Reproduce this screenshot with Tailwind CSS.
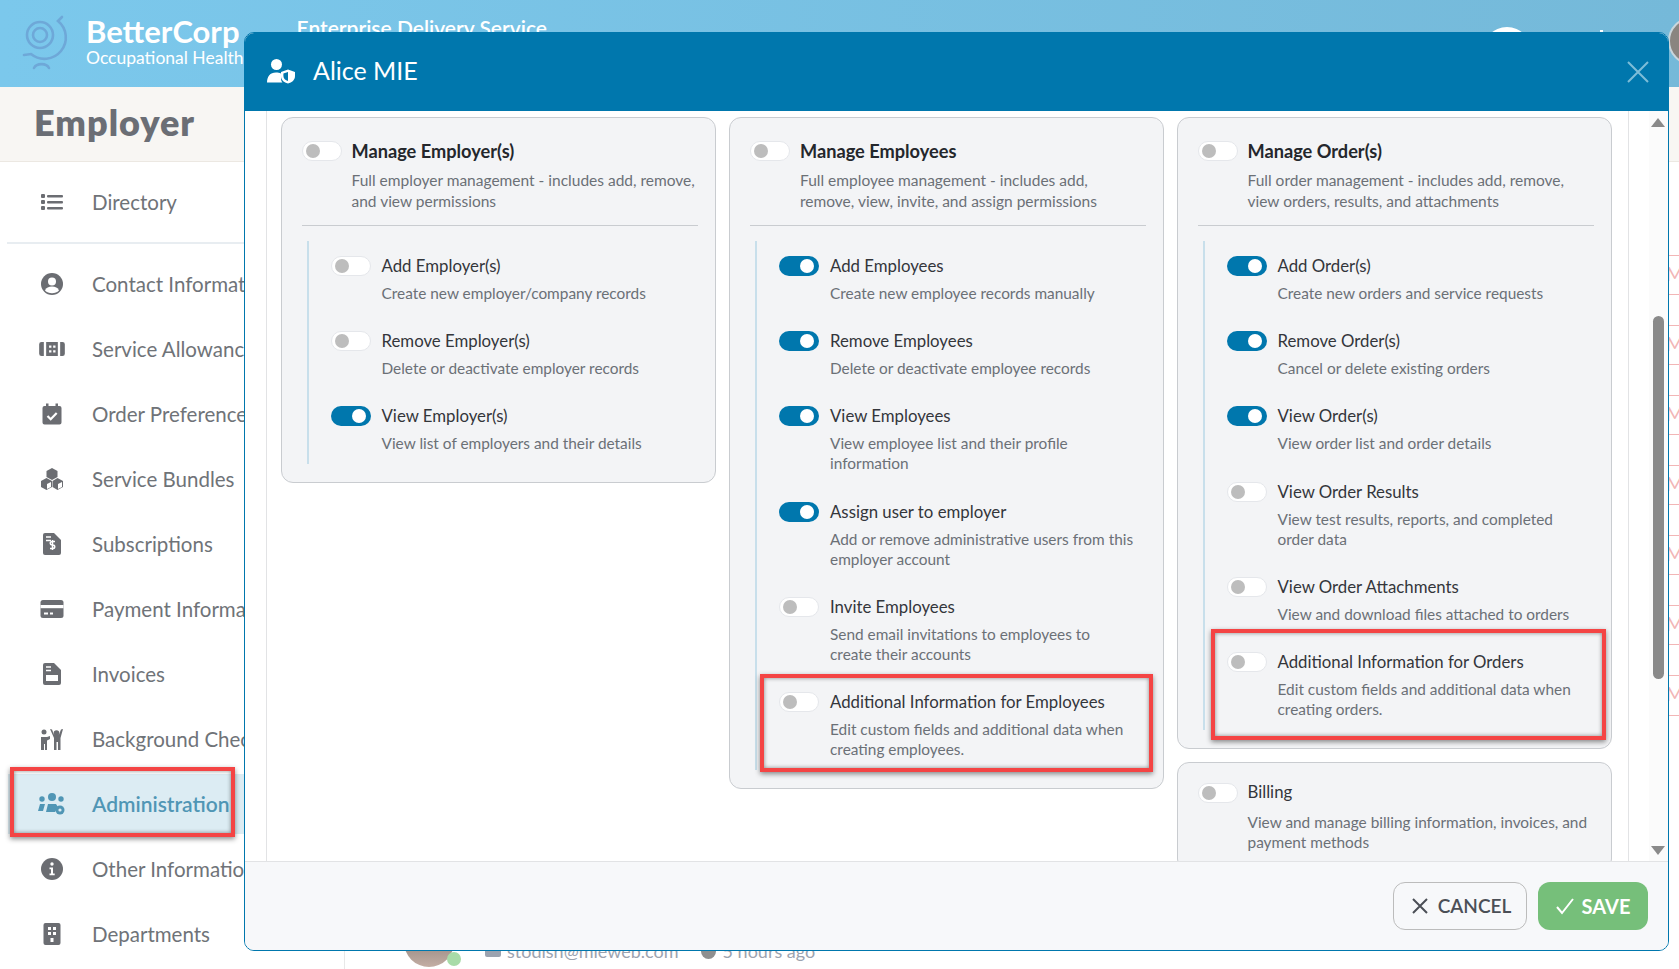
<!doctype html>
<html lang="en">
  <head>
    <meta charset="UTF-8" />
    <meta name="viewport" content="width=device-width, initial-scale=1.0" />
    <title>Employer - Administration</title>
    <script src="https://cdn.jsdelivr.net/npm/@tailwindcss/browser@4"></script>
  </head>
  <body class="relative h-[969px] w-[1679px] overflow-hidden bg-white [font-family:Lato,sans-serif]">
    <!-- Top bar -->
    <header class="flex h-[87px] bg-gradient-to-r from-[#7bc8ec] to-[#75b9d9]">
      <svg class="ml-[20px] mt-[10px] h-[60px] w-[50px] shrink-0" viewBox="20 10 50 60" fill="none" stroke="#6ea8d8" stroke-width="2.6" stroke-linecap="round">
        <circle cx="40" cy="35" r="7" />
        <circle cx="40" cy="35" r="13" />
        <path d="M62 17 L58 21 A21 21 0 0 1 31 54 L24 55" />
        <path d="M34 68 A8 6 0 0 1 49 68" />
      </svg>
      <div class="ml-[16px] pt-[14px] text-white">
        <div class="text-[31px] font-bold leading-[34px]">BetterCorp</div>
        <div class="text-[17.5px] leading-[20px]">Occupational Health</div>
      </div>
      <div class="ml-[53px] pt-[16px] text-[21px] font-semibold leading-[24px] text-white">Enterprise Delivery Service</div>
      <div class="ml-auto mr-[-37px] flex shrink-0 items-start">
        <div class="mt-[27px] size-[50px] rounded-full bg-white"></div>
        <div class="ml-[68px] mt-[30px] size-[3px] bg-white"></div>
        <div class="ml-[65px] mt-[17px] size-[48px] rounded-full border-2 border-[#c9d6dc] bg-[#8a8580]"></div>
      </div>
    </header>

    <!-- Section title -->
    <div class="flex h-[75px] items-center border-b border-[#ece8e2] bg-[#f8f6f3] pb-[4px] pl-[34px]">
      <h1 class="text-[36px] font-extrabold tracking-[1px] text-[#6b6e75]">Employer</h1>
    </div>

    <div class="flex h-[807px]">
      <!-- Sidebar -->
      <nav class="w-[345px] shrink-0 border-r border-[#e8e8e8] text-[20.500px] text-[#6f7378]">
        <a class="flex h-[80px] items-center pl-[40px]">
          <svg class="mr-[28px] size-[24px]" viewBox="0 0 24 24" fill="#6b6d72"><rect x="1" y="4" width="4" height="4" rx="1" /><rect x="1" y="10" width="4" height="4" rx="1" /><rect x="1" y="16" width="4" height="4" rx="1" /><rect x="7" y="5" width="16" height="2.4" rx="1" /><rect x="7" y="11" width="16" height="2.4" rx="1" /><rect x="7" y="17" width="16" height="2.4" rx="1" /></svg>
          Directory
        </a>
        <div class="ml-[7px] h-[2px] bg-[#e8edf1]"></div>
        <div class="mt-[10px] flex flex-col gap-[5px]">
          <a class="ml-[8px] flex h-[60px] items-center whitespace-nowrap pl-[32px]">
            <svg class="mr-[28px] size-[24px] shrink-0" viewBox="0 0 24 24"><circle cx="12" cy="12" r="11" fill="#6b6d72" /><circle cx="12" cy="9.5" r="4" fill="#fff" /><path d="M5 18.5c1.2-3 3.6-4 7-4s5.800 1 7 4c-1.800 1.700-4.200 2.800-7 2.800s-5.200-1.100-7-2.800z" fill="#fff" /></svg>
            Contact Information
          </a>
          <a class="ml-[8px] flex h-[60px] items-center whitespace-nowrap pl-[32px]">
            <svg class="-ml-[2px] mr-[26px] size-[28px] shrink-0" viewBox="0 0 24 24" fill="#6b6d72"><path d="M3 6h2v12H3a2 2 0 0 1-2-2V8a2 2 0 0 1 2-2zM21 6h-2v12h2a2 2 0 0 0 2-2V8a2 2 0 0 0-2-2z" /><path fill-rule="evenodd" d="M7 6h10v12H7zM9.500 9v2h2V9zm3.500 0v2h2V9zm-3.500 4v2h2v-2zm3.500 0v2h2v-2z" /></svg>
            Service Allowances
          </a>
          <a class="ml-[8px] flex h-[60px] items-center whitespace-nowrap pl-[32px]">
            <svg class="mr-[28px] size-[24px] shrink-0" viewBox="0 0 24 24"><path d="M6 1.500h2.500V4h7V1.500H18V4h1.500a2 2 0 0 1 2 2v14.500a2 2 0 0 1-2 2h-15a2 2 0 0 1-2-2V6a2 2 0 0 1 2-2H6z" fill="#6b6d72" /><path d="M7.500 14l3.200 3.200 6-6.200" fill="none" stroke="#fff" stroke-width="2.200" /></svg>
            Order Preferences
          </a>
          <a class="ml-[8px] flex h-[60px] items-center whitespace-nowrap pl-[32px]">
            <svg class="mr-[28px] size-[24px] shrink-0" viewBox="0 0 24 24" fill="#6b6d72"><path d="M12 1l5.500 3v6L12 13l-5.500-3V4z" /><path d="M6.500 11L12 14v6l-5.500 3L1 20v-6z" /><path d="M17.500 11L23 14v6l-5.500 3-5-3v-6z" /><path d="M7 17l4-2v5l-4 2zM18 17l4-2v5l-4 2z" fill="#fff" /></svg>
            Service Bundles
          </a>
          <a class="ml-[8px] flex h-[60px] items-center whitespace-nowrap pl-[32px]">
            <svg class="mr-[28px] size-[24px] shrink-0" viewBox="0 0 24 24"><path d="M5 1h9l7 7v13a2 2 0 0 1-2 2H5a2 2 0 0 1-2-2V3a2 2 0 0 1 2-2z" fill="#6b6d72" /><path d="M6 5h5M6 8.500h5" stroke="#fff" stroke-width="1.500" /><path d="M15 9.500h-3a1.500 1.500 0 0 0 0 3.500h1a1.500 1.500 0 0 1 0 3.500h-3M12.500 8v10" fill="none" stroke="#fff" stroke-width="1.500" /></svg>
            Subscriptions
          </a>
          <a class="ml-[8px] flex h-[60px] items-center whitespace-nowrap pl-[32px]">
            <svg class="mr-[28px] size-[24px] shrink-0" viewBox="0 0 24 24"><rect x="0.500" y="3" width="23" height="18" rx="2.500" fill="#6b6d72" /><rect x="0.500" y="8" width="23" height="3.200" fill="#fff" /><path d="M4 16.500h4M10 16.500h3" stroke="#fff" stroke-width="1.800" /></svg>
            Payment Information
          </a>
          <a class="ml-[8px] flex h-[60px] items-center whitespace-nowrap pl-[32px]">
            <svg class="mr-[28px] size-[24px] shrink-0" viewBox="0 0 24 24"><path d="M5 1h9l7 7v13a2 2 0 0 1-2 2H5a2 2 0 0 1-2-2V3a2 2 0 0 1 2-2z" fill="#6b6d72" /><path d="M6 5h5M6 8.500h5" stroke="#fff" stroke-width="1.500" /><rect x="6" y="13" width="12" height="6" fill="#fff" /></svg>
            Invoices
          </a>
          <a class="ml-[8px] flex h-[60px] items-center whitespace-nowrap pl-[32px]">
            <svg class="mr-[28px] size-[24px] shrink-0" viewBox="0 0 24 24" fill="#6b6d72"><circle cx="4" cy="5" r="2.500" /><path d="M1 10h6l3-1v3l-3 1.500V23H5v-6H4v6H1z" /><circle cx="16.500" cy="6" r="2.800" /><path d="M10 2l2 .500 2 5h5l2-5 2-.500-2.500 9v12h-2.500v-8h-1.500v8H14V11z" /></svg>
            Background Checks
          </a>
          <!-- Active item, called out with a red box -->
          <a class="relative ml-[8px] flex h-[60px] items-center whitespace-nowrap bg-[#dcecf3] pl-[32px] text-[21px] font-semibold text-[#5096b5]">
            <svg class="-ml-[2px] mr-[26px] size-[28px] shrink-0" viewBox="0 0 28 24" fill="#5096b5"><circle cx="14" cy="5" r="4" /><circle cx="4" cy="7" r="2.700" /><circle cx="23" cy="7" r="2.700" /><path d="M0 19l2-7h5l-2 7zM8 20l2-8h8l2 3-3 5z" /><circle cx="22" cy="18" r="4.500" /><circle cx="22" cy="18" r="1.600" fill="#dcecf3" /></svg>
            Administration
            <div class="absolute left-[2px] top-[-7px] h-[70px] w-[225px] border-4 border-[#f44444] shadow-[0_2px_5px_rgba(0,0,0,0.45),inset_0_0_4px_rgba(0,0,0,0.45)]"></div>
          </a>
          <a class="ml-[8px] flex h-[60px] items-center whitespace-nowrap pl-[32px]">
            <svg class="mr-[28px] size-[24px] shrink-0" viewBox="0 0 24 24"><circle cx="12" cy="12" r="11" fill="#6b6d72" /><circle cx="12" cy="7" r="1.700" fill="#fff" /><path d="M9.500 10.500H13v6h1.700v1.800H9.500v-1.800h1.500v-4.200H9.500z" fill="#fff" /></svg>
            Other Information
          </a>
          <a class="ml-[8px] flex h-[60px] items-center whitespace-nowrap pl-[32px]">
            <svg class="mr-[28px] size-[24px] shrink-0" viewBox="0 0 24 24"><rect x="3.500" y="1" width="17" height="22" rx="2" fill="#6b6d72" /><path d="M8 5h3v3H8zM13 5h3v3h-3zM8 10h3v3H8zM13 10h3v3h-3zM10.500 16h3v4h-3z" fill="#fff" /></svg>
            Departments
          </a>
        </div>
      </nav>

      <!-- Page behind the dialog -->
      <main class="flex flex-1 justify-between text-[18px] text-[#9ca3af]">
        <div class="flex items-end pb-[2px] pl-[59px]">
          <div class="relative size-[50px] rounded-full bg-gradient-to-b from-[#6f6a66] to-[#c4aea4]">
            <span class="absolute bottom-[1px] right-[-7px] size-[14px] rounded-full bg-[#a8dba8]"></span>
          </div>
          <div class="ml-[31px] flex items-center pb-[6px] leading-[20px]">
            <svg class="mr-[6px] size-[16px]" viewBox="0 0 16 16" fill="#9ca3af"><rect y="3" width="16" height="11" rx="2" /></svg>
            <span>stodish@mieweb.com</span>
            <svg class="ml-[22px] mr-[7px] size-[15px]" viewBox="0 0 16 16" fill="#8f8f8f"><circle cx="8" cy="8" r="8" /></svg>
            <span>5 hours ago</span>
          </div>
        </div>
        <div class="flex w-[80px] flex-col gap-[30px] pt-[93px] text-[19px] leading-[36px] text-[#f2b6b6]">
          <div class="h-[40px] shrink-0 overflow-hidden rounded-l-lg border-y border-l border-[#f2b6b6] pl-[66px]">M</div>
          <div class="h-[40px] shrink-0 overflow-hidden rounded-l-lg border-y border-l border-[#f2b6b6] pl-[66px]">M</div>
          <div class="h-[40px] shrink-0 overflow-hidden rounded-l-lg border-y border-l border-[#f2b6b6] pl-[66px]">M</div>
          <div class="h-[40px] shrink-0 overflow-hidden rounded-l-lg border-y border-l border-[#f2b6b6] pl-[66px]">M</div>
          <div class="h-[40px] shrink-0 overflow-hidden rounded-l-lg border-y border-l border-[#f2b6b6] pl-[66px]">M</div>
          <div class="h-[40px] shrink-0 overflow-hidden rounded-l-lg border-y border-l border-[#f2b6b6] pl-[66px]">M</div>
          <div class="h-[41px] shrink-0 overflow-hidden rounded-l-lg border-y border-l border-[#f2b6b6] pl-[66px]">M</div>
        </div>
      </main>
    </div>

    <!-- Permissions dialog -->
    <div class="absolute left-[244px] top-[32px] flex h-[919px] w-[1425px] flex-col overflow-hidden rounded-[10px] border-[1.5px] border-[#0077ad] bg-white">
      <div class="flex h-[78px] shrink-0 items-center bg-[#0077ad] pb-[3px] pl-[22px] pr-[19px] text-white">
        <svg class="mr-[18px] size-[28px]" viewBox="0 0 28 25" fill="#fff"><circle cx="9.500" cy="6" r="5.500" /><path d="M0 24c0-6 3-10 9-10 2 0 3.500.400 5 1v5c0 1.500.500 3 1.500 4z" /><path fill-rule="evenodd" d="M21 11l7 2.500v4c0 4-3 6.500-7 7.500-4-1-7-3.500-7-7.500v-4zm0 2.400l-4.600 1.600v2.500c0 2.500 2 4.300 4.600 5.100z" /></svg>
        <span class="text-[25px] leading-none">Alice MIE</span>
        <svg class="ml-auto mt-[3px] size-[22px]" viewBox="0 0 22 22" fill="none" stroke="#7dbdd8" stroke-width="2"><path d="M1 1l20 20M21 1L1 21" /></svg>
      </div>

      <div class="flex min-h-0 flex-1 overflow-hidden">
        <div class="ml-[20.500px] w-[1363px] shrink-0 border-x border-[#e2e3e5] pl-[14px] pr-[15px] pt-[6px]">
          <div class="grid w-[1332px] grid-cols-3 items-start gap-[13.500px]">
            <!-- Employer column -->
            <section class="rounded-xl border border-[#c9ccd0] bg-[#f3f4f6] pb-[18px] pl-[20px] pr-[17px] pt-[23px]">
              <div class="flex">
                <span class="relative mr-[10px] h-[20px] w-[40px] shrink-0 rounded-full border border-[#e5e7eb] bg-white"><span class="absolute left-[3px] top-[2px] size-[14px] rounded-full bg-[#bdbdbd]"></span></span>
                <div>
                  <h3 class="text-[18.200px] font-bold leading-[20px] text-[#24272c]">Manage Employer(s)</h3>
                  <p class="mt-[9px] whitespace-nowrap text-[15.500px] leading-[20.500px] text-[#6b7076]">Full employer management - includes add, remove,<br />and view permissions</p>
                </div>
              </div>
              <div class="mt-[14px] h-px bg-[#c9ccd0]"></div>
              <div class="ml-[5px] mt-[15px] flex flex-col gap-[28.200px] border-l-2 border-[#c8dfeb] pb-[11px] pl-[22px] pt-[15px]">
                <div class="flex">
                  <span class="relative mr-[11px] h-[20px] w-[40px] shrink-0 rounded-full border border-[#e5e7eb] bg-white"><span class="absolute left-[3px] top-[2px] size-[14px] rounded-full bg-[#bdbdbd]"></span></span>
                  <div><h4 class="text-[16.800px] leading-[20px] text-[#33363b]">Add Employer(s)</h4><p class="mt-[7px] whitespace-nowrap text-[15.400px] leading-[20px] text-[#6b7076]">Create new employer/company records</p></div>
                </div>
                <div class="flex">
                  <span class="relative mr-[11px] h-[20px] w-[40px] shrink-0 rounded-full border border-[#e5e7eb] bg-white"><span class="absolute left-[3px] top-[2px] size-[14px] rounded-full bg-[#bdbdbd]"></span></span>
                  <div><h4 class="text-[16.800px] leading-[20px] text-[#33363b]">Remove Employer(s)</h4><p class="mt-[7px] whitespace-nowrap text-[15.400px] leading-[20px] text-[#6b7076]">Delete or deactivate employer records</p></div>
                </div>
                <div class="flex">
                  <span class="relative mr-[11px] h-[20px] w-[40px] shrink-0 rounded-full bg-[#0077ad]"><span class="absolute right-[5px] top-[3px] size-[14px] rounded-full bg-white"></span></span>
                  <div><h4 class="text-[16.800px] leading-[20px] text-[#33363b]">View Employer(s)</h4><p class="mt-[7px] whitespace-nowrap text-[15.400px] leading-[20px] text-[#6b7076]">View list of employers and their details</p></div>
                </div>
              </div>
            </section>

            <!-- Employees column -->
            <section class="rounded-xl border border-[#c9ccd0] bg-[#f3f4f6] pb-[18px] pl-[20px] pr-[17px] pt-[23px]">
              <div class="flex">
                <span class="relative mr-[10px] h-[20px] w-[40px] shrink-0 rounded-full border border-[#e5e7eb] bg-white"><span class="absolute left-[3px] top-[2px] size-[14px] rounded-full bg-[#bdbdbd]"></span></span>
                <div>
                  <h3 class="text-[18.200px] font-bold leading-[20px] text-[#24272c]">Manage Employees</h3>
                  <p class="mt-[9px] whitespace-nowrap text-[15.500px] leading-[20.500px] text-[#6b7076]">Full employee management - includes add,<br />remove, view, invite, and assign permissions</p>
                </div>
              </div>
              <div class="mt-[14px] h-px bg-[#c9ccd0]"></div>
              <div class="ml-[5px] mt-[15px] flex flex-col gap-[28.200px] border-l-2 border-[#c8dfeb] pb-[11px] pl-[22px] pt-[15px]">
                <div class="flex">
                  <span class="relative mr-[11px] h-[20px] w-[40px] shrink-0 rounded-full bg-[#0077ad]"><span class="absolute right-[5px] top-[3px] size-[14px] rounded-full bg-white"></span></span>
                  <div><h4 class="text-[16.800px] leading-[20px] text-[#33363b]">Add Employees</h4><p class="mt-[7px] whitespace-nowrap text-[15.400px] leading-[20px] text-[#6b7076]">Create new employee records manually</p></div>
                </div>
                <div class="flex">
                  <span class="relative mr-[11px] h-[20px] w-[40px] shrink-0 rounded-full bg-[#0077ad]"><span class="absolute right-[5px] top-[3px] size-[14px] rounded-full bg-white"></span></span>
                  <div><h4 class="text-[16.800px] leading-[20px] text-[#33363b]">Remove Employees</h4><p class="mt-[7px] whitespace-nowrap text-[15.400px] leading-[20px] text-[#6b7076]">Delete or deactivate employee records</p></div>
                </div>
                <div class="flex">
                  <span class="relative mr-[11px] h-[20px] w-[40px] shrink-0 rounded-full bg-[#0077ad]"><span class="absolute right-[5px] top-[3px] size-[14px] rounded-full bg-white"></span></span>
                  <div><h4 class="text-[16.800px] leading-[20px] text-[#33363b]">View Employees</h4><p class="mt-[7px] whitespace-nowrap text-[15.400px] leading-[20px] text-[#6b7076]">View employee list and their profile<br />information</p></div>
                </div>
                <div class="flex">
                  <span class="relative mr-[11px] h-[20px] w-[40px] shrink-0 rounded-full bg-[#0077ad]"><span class="absolute right-[5px] top-[3px] size-[14px] rounded-full bg-white"></span></span>
                  <div><h4 class="text-[16.800px] leading-[20px] text-[#33363b]">Assign user to employer</h4><p class="mt-[7px] whitespace-nowrap text-[15.400px] leading-[20px] text-[#6b7076]">Add or remove administrative users from this<br />employer account</p></div>
                </div>
                <div class="flex">
                  <span class="relative mr-[11px] h-[20px] w-[40px] shrink-0 rounded-full border border-[#e5e7eb] bg-white"><span class="absolute left-[3px] top-[2px] size-[14px] rounded-full bg-[#bdbdbd]"></span></span>
                  <div><h4 class="text-[16.800px] leading-[20px] text-[#33363b]">Invite Employees</h4><p class="mt-[7px] whitespace-nowrap text-[15.400px] leading-[20px] text-[#6b7076]">Send email invitations to employees to<br />create their accounts</p></div>
                </div>
                <div class="relative flex">
                  <span class="relative mr-[11px] h-[20px] w-[40px] shrink-0 rounded-full border border-[#e5e7eb] bg-white"><span class="absolute left-[3px] top-[2px] size-[14px] rounded-full bg-[#bdbdbd]"></span></span>
                  <div><h4 class="text-[16.800px] leading-[20px] text-[#33363b]">Additional Information for Employees</h4><p class="mt-[7px] whitespace-nowrap text-[15.400px] leading-[20px] text-[#6b7076]">Edit custom fields and additional data when<br />creating employees.</p></div>
                  <div class="absolute -bottom-[13px] -left-[19px] -right-[7px] -top-[18px] border-4 border-[#f44444] shadow-[0_2px_5px_rgba(0,0,0,0.45),inset_0_0_4px_rgba(0,0,0,0.45)]"></div>
                </div>
              </div>
            </section>

            <!-- Orders column -->
            <div class="-ml-[1px] mr-[1px] flex flex-col gap-[13px]">
              <section class="rounded-xl border border-[#c9ccd0] bg-[#f3f4f6] pb-[18px] pl-[20px] pr-[17px] pt-[23px]">
                <div class="flex">
                  <span class="relative mr-[10px] h-[20px] w-[40px] shrink-0 rounded-full border border-[#e5e7eb] bg-white"><span class="absolute left-[3px] top-[2px] size-[14px] rounded-full bg-[#bdbdbd]"></span></span>
                  <div>
                    <h3 class="text-[18.200px] font-bold leading-[20px] text-[#24272c]">Manage Order(s)</h3>
                    <p class="mt-[9px] whitespace-nowrap text-[15.500px] leading-[20.500px] text-[#6b7076]">Full order management - includes add, remove,<br />view orders, results, and attachments</p>
                  </div>
                </div>
                <div class="mt-[14px] h-px bg-[#c9ccd0]"></div>
                <div class="ml-[5px] mt-[15px] flex flex-col gap-[28.200px] border-l-2 border-[#c8dfeb] pb-[11px] pl-[22px] pt-[15px]">
                  <div class="flex">
                    <span class="relative mr-[11px] h-[20px] w-[40px] shrink-0 rounded-full bg-[#0077ad]"><span class="absolute right-[5px] top-[3px] size-[14px] rounded-full bg-white"></span></span>
                    <div><h4 class="text-[16.800px] leading-[20px] text-[#33363b]">Add Order(s)</h4><p class="mt-[7px] whitespace-nowrap text-[15.400px] leading-[20px] text-[#6b7076]">Create new orders and service requests</p></div>
                  </div>
                  <div class="flex">
                    <span class="relative mr-[11px] h-[20px] w-[40px] shrink-0 rounded-full bg-[#0077ad]"><span class="absolute right-[5px] top-[3px] size-[14px] rounded-full bg-white"></span></span>
                    <div><h4 class="text-[16.800px] leading-[20px] text-[#33363b]">Remove Order(s)</h4><p class="mt-[7px] whitespace-nowrap text-[15.400px] leading-[20px] text-[#6b7076]">Cancel or delete existing orders</p></div>
                  </div>
                  <div class="flex">
                    <span class="relative mr-[11px] h-[20px] w-[40px] shrink-0 rounded-full bg-[#0077ad]"><span class="absolute right-[5px] top-[3px] size-[14px] rounded-full bg-white"></span></span>
                    <div><h4 class="text-[16.800px] leading-[20px] text-[#33363b]">View Order(s)</h4><p class="mt-[7px] whitespace-nowrap text-[15.400px] leading-[20px] text-[#6b7076]">View order list and order details</p></div>
                  </div>
                  <div class="flex">
                    <span class="relative mr-[11px] h-[20px] w-[40px] shrink-0 rounded-full border border-[#e5e7eb] bg-white"><span class="absolute left-[3px] top-[2px] size-[14px] rounded-full bg-[#bdbdbd]"></span></span>
                    <div><h4 class="text-[16.800px] leading-[20px] text-[#33363b]">View Order Results</h4><p class="mt-[7px] whitespace-nowrap text-[15.400px] leading-[20px] text-[#6b7076]">View test results, reports, and completed<br />order data</p></div>
                  </div>
                  <div class="flex">
                    <span class="relative mr-[11px] h-[20px] w-[40px] shrink-0 rounded-full border border-[#e5e7eb] bg-white"><span class="absolute left-[3px] top-[2px] size-[14px] rounded-full bg-[#bdbdbd]"></span></span>
                    <div><h4 class="text-[16.800px] leading-[20px] text-[#33363b]">View Order Attachments</h4><p class="mt-[7px] whitespace-nowrap text-[15.400px] leading-[20px] text-[#6b7076]">View and download files attached to orders</p></div>
                  </div>
                  <div class="relative flex">
                    <span class="relative mr-[11px] h-[20px] w-[40px] shrink-0 rounded-full border border-[#e5e7eb] bg-white"><span class="absolute left-[3px] top-[2px] size-[14px] rounded-full bg-[#bdbdbd]"></span></span>
                    <div><h4 class="text-[16.800px] leading-[20px] text-[#33363b]">Additional Information for Orders</h4><p class="mt-[7px] whitespace-nowrap text-[15.400px] leading-[20px] text-[#6b7076]">Edit custom fields and additional data when<br />creating orders.</p></div>
                    <div class="absolute -bottom-[21px] -left-[16px] -right-[12px] -top-[23px] border-4 border-[#f44444] shadow-[0_2px_5px_rgba(0,0,0,0.45),inset_0_0_4px_rgba(0,0,0,0.45)]"></div>
                  </div>
                </div>
              </section>
              <section class="rounded-xl border border-[#c9ccd0] bg-[#f3f4f6] pb-[18px] pl-[20px] pr-[17px] pt-[20px]">
                <div class="flex">
                  <span class="relative mr-[10px] h-[20px] w-[40px] shrink-0 rounded-full border border-[#e5e7eb] bg-white"><span class="absolute left-[3px] top-[2px] size-[14px] rounded-full bg-[#bdbdbd]"></span></span>
                  <div>
                    <h3 class="mt-[-1px] text-[16.800px] leading-[20px] text-[#33363b]">Billing</h3>
                    <p class="mt-[10px] whitespace-nowrap text-[15.400px] leading-[20px] text-[#6b7076]">View and manage billing information, invoices, and<br />payment methods</p>
                  </div>
                </div>
              </section>
            </div>
          </div>
        </div>
        <!-- Scrollbar -->
        <div class="ml-[20px] flex w-[19px] shrink-0 flex-col items-center bg-[#fbfbfb] pt-[7px]">
          <div class="size-0 border-x-[7px] border-b-[9px] border-x-transparent border-b-[#8a8a8a]"></div>
          <div class="mt-[189px] h-[363px] w-[11px] rounded-full bg-[#8a8a8a]"></div>
          <div class="mt-auto mb-[6px] size-0 border-x-[7px] border-t-[9px] border-x-transparent border-t-[#8a8a8a]"></div>
        </div>
      </div>

      <div class="flex h-[89px] shrink-0 items-start justify-end gap-[11px] border-t border-[#e2e3e5] bg-[#f7f8fa] pr-[20px] pt-[20px]">
        <button class="flex h-[48px] w-[134px] items-center justify-center gap-[10px] rounded-xl border border-[#bcbcbc] pl-[3px] text-[19px] font-semibold text-[#4b4f56]">
          <svg class="size-[16px]" viewBox="0 0 16 16" fill="none" stroke="#4b4f56" stroke-width="2"><path d="M1 1l14 14M15 1L1 15" /></svg>
          CANCEL
        </button>
        <button class="flex h-[48px] w-[110px] items-center justify-center gap-[8px] rounded-xl bg-[#76bf7a] text-[20px] font-bold text-white">
          <svg class="size-[18px]" viewBox="0 0 18 18" fill="none" stroke="#fff" stroke-width="2"><path d="M1 10l5 6L17 2" /></svg>
          SAVE
        </button>
      </div>
    </div>
  </body>
</html>
